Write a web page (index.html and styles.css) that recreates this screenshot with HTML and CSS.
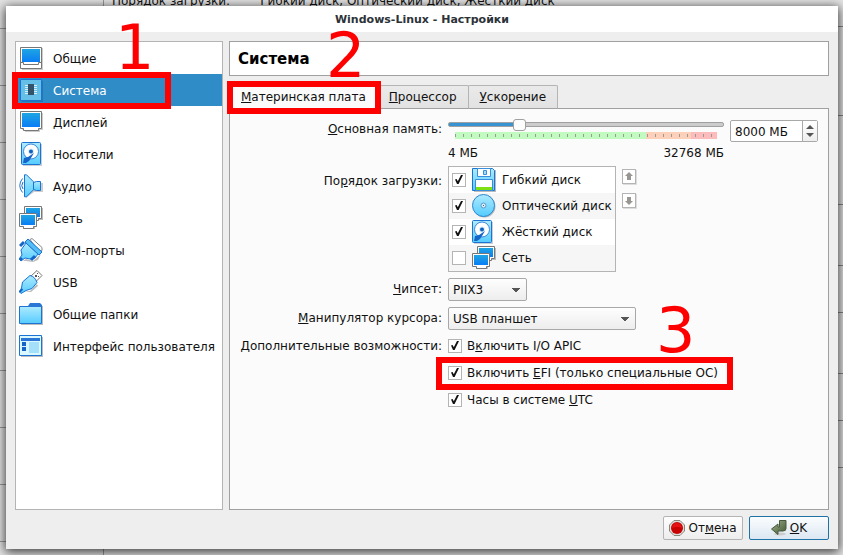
FILE: index.html
```
<!DOCTYPE html>
<html lang="ru">
<head>
    <meta charset="UTF-8">
    <title>Windows-Linux - Настройки</title>
    <link rel="stylesheet" href="styles.css">
</head>
<body>
<svg class="sprite" aria-hidden="true">
    <defs>
        <linearGradient id="blue" x1="0" y1="0" x2="0" y2="1">
            <stop offset="0" stop-color="#1ea5e2"/><stop offset="1" stop-color="#0a7df5"/>
        </linearGradient>
        <linearGradient id="sky" x1="0" y1="0" x2="0" y2="1">
            <stop offset="0" stop-color="#aeeaff"/><stop offset="1" stop-color="#55ccff"/>
        </linearGradient>
        <linearGradient id="olive" x1="0" y1="0" x2="1" y2="1">
            <stop offset="0" stop-color="#9db184"/><stop offset="1" stop-color="#43563a"/>
        </linearGradient>
    </defs>
    <symbol id="i-general" viewBox="0 0 24 24">
        <path d="M2 2h22v22H3z" fill="#ccc"/>
        <path d="M1.500 1.500h21v21h-21z" fill="#fff" stroke="#777"/>
        <path d="M3 3h18v13H3z" fill="url(#blue)"/>
        <path d="M1.500 16.500h3v2h15v-2h3" fill="none" stroke="#777"/>
    </symbol>
    <symbol id="i-system" viewBox="0 0 24 24">
        <path d="M3 3h21v21H3z" fill="#2377b4"/>
        <path d="M1.500 1.500h21v21h-21z" fill="url(#sky)" stroke="#1c73d2"/>
        <path d="M2 2h20v20H2z" fill="#65bfe6"/>
        <path d="M6 7.500h12M6 9.500h12M6 11.500h12M6 13.500h12M6 15.500h12" stroke="#d8f0fa"/>
        <path d="M9 6h6v11H9z" fill="#33536b"/>
    </symbol>
    <symbol id="i-display" viewBox="0 0 24 24">
        <path d="M3 3h21v17h-3v2H6v-2H3z" fill="#ccc"/>
        <path d="M1.500 1.500h21v17h-3v2h-15v-2h-3z" fill="#fff" stroke="#777"/>
        <path d="M3 3h18v14H3z" fill="url(#blue)"/>
    </symbol>
    <symbol id="i-disk" viewBox="0 0 24 24">
        <path d="M2 2h19v22H2z" fill="#c8d0d6"/>
        <rect x=".5" y=".5" width="19" height="22" rx="1" fill="url(#sky)" stroke="#1c73d2"/>
        <circle cx="10" cy="9.500" r="7.500" fill="#fff" stroke="#3a86d8"/>
        <circle cx="10" cy="9.500" r="3" fill="#d6ecf8"/>
        <circle cx="10" cy="9.500" r="2" fill="#1060c0"/>
        <path d="M2 21l1-5 4-1 6-4-3 5-2 3-3 2z" fill="#1565c8"/>
    </symbol>
    <symbol id="i-audio" viewBox="0 0 24 24">
        <path d="M7 3l8 6h9v9h-9l-8 6z" fill="#ccc"/>
        <path d="M5.500 .8h2l7 7v8l-7 7h-2z" fill="url(#sky)" stroke="#1c73d2"/>
        <path d="M14.500 8.500l3-1h4v9h-4l-3-1z" fill="url(#sky)" stroke="#1c73d2"/>
        <path d="M3.500 4.500q-5.500 7 0 14M4 8q-2.500 4 0 7" fill="none" stroke="#1c73d2"/>
    </symbol>
    <symbol id="i-net" viewBox="0 0 24 24">
        <path d="M8 2h16v12h-6v7h-2v2H4z" fill="#bbb"/>
        <path d="M5.500 .5h17v12h-3v2h-10v-2h-4z" fill="#fff" stroke="#777"/>
        <path d="M7 2h14v9H7z" fill="url(#blue)"/>
        <path d="M.5 7.500h17v13h-3v2h-10v-2h-4z" fill="#fff" stroke="#777"/>
        <path d="M2 9h14v10H2z" fill="url(#blue)"/>
    </symbol>
    <symbol id="i-com" viewBox="0 0 24 24">
        <path d="M11 1.500l2-1 10 9v3l-3 1z" fill="#fff" stroke="#888"/>
        <path d="M4 23l3-2 7 2 8-7-3 6-5 2-7-1z" fill="#bbb"/>
        <path d="M7 5l12 11-3 4-5 1-5-1-4 3-2-2 3-4-1-5z" fill="url(#sky)" stroke="#1c73d2"/>
        <path d="M9 1l14 13-3 3L6 4z" fill="#55bff5" stroke="#1c73d2"/>
        <path d="M1 8l4-4M12 22l4-4M1 22l2-2" stroke="#1565c8" stroke-width="3"/>
    </symbol>
    <symbol id="i-usb" viewBox="0 0 24 24">
        <path d="M12 6l6-5.500 5 5-6 6z" fill="#fff" stroke="#777"/>
        <path d="M16 5h2v2h-2zM18 3h1v1h-1zM19 6h1v1h-1z" fill="#555"/>
        <path d="M5 22l6-1 7-7 1 2-7 6z" fill="#bbb"/>
        <path d="M11 5.500q5 1 7 7l-5 6-6 2-5 3-1.500-1.500 2-4 1-6z" fill="url(#sky)" stroke="#1c73d2"/>
        <path d="M.5 22l3-3" stroke="#1565c8" stroke-width="2"/>
    </symbol>
    <symbol id="i-folder" viewBox="0 0 24 24">
        <path d="M2 4h22v19H2z" fill="#bbb"/>
        <path d="M9 4l2-3h10l2 2v3H9z" fill="#2b76d4"/>
        <path d="M.5 4.500h22v17h-22z" fill="url(#sky)" stroke="#1c73d2"/>
        <path d="M9 4h13v1H9z" fill="#2b76d4"/>
    </symbol>
    <symbol id="i-ui" viewBox="0 0 24 24">
        <path d="M2 3h22v20H2z" fill="#bbb"/>
        <path d="M.5 1.500h22v20h-22z" fill="#d9f8ff" stroke="#1c73d2"/>
        <path d="M2 4h19v3H2z" fill="#2b76d4"/>
        <path d="M3 8h4v4H3zM3 13h4v4H3z" fill="#1565c8"/>
        <path d="M10 8h10v11H10z" fill="#a5e0fa"/>
    </symbol>
    <symbol id="i-floppy" viewBox="0 0 24 24">
        <path d="M2 2h22v22H2z" fill="#bbb"/>
        <path d="M.5 .5h20l2 2v20h-22z" fill="url(#sky)" stroke="#1c73d2"/>
        <path d="M5.500 .5h13v8h-13z" fill="#fff" stroke="#3a8fdc"/>
        <path d="M11.500 2.500h3v4h-3z" fill="#9bdcf8" stroke="#3a8fdc"/>
        <path d="M3.500 11.500h17v11h-17z" fill="#fff" stroke="#3a8fdc"/>
        <path d="M4 19h16v3H4z" fill="#7ee010"/>
    </symbol>
    <symbol id="i-cd" viewBox="0 0 24 24">
        <circle cx="12.500" cy="12.500" r="11" fill="#bbb"/>
        <circle cx="11.500" cy="11.500" r="11" fill="url(#sky)" stroke="#2f85cc"/>
        <circle cx="11.500" cy="11.500" r="2.500" fill="#d8eaf4" stroke="#5a9cc8"/>
        <path d="M11 11h1v1h-1z" fill="#3a70a0"/>
    </symbol>
    <symbol id="i-cancel" viewBox="0 0 16 16">
        <path d="M5 .5h6L15.500 5v6L11 15.500H5L.5 11V5z" fill="#ddd" stroke="#888477"/>
        <circle cx="8" cy="8" r="6" fill="#c80000"/>
        <path d="M3 8a5 5 0 0 1 10 0q-5-2-10 0z" fill="#e41212"/>
    </symbol>
    <symbol id="i-ok" viewBox="0 0 16 16">
        <ellipse cx="9" cy="14" rx="6" ry="1.500" fill="#ccc"/>
        <path d="M8.500 .5h6.500v8q0 2.500-3 2.500H7v3.500L.5 9 7 4v3h1.500z" fill="url(#olive)" stroke="#48583c"/>
    </symbol>
</svg>

<!-- окно менеджера позади диалога -->
<div class="backdrop">
    <div class="lines_left"></div>
    <svg class="lines_right"><path d="M0 26.500h6M0 115.500h6M0 204.500h6M0 265.500h6M0 312.500h6M0 373.500h6M0 420.500h6M0 467.500h6" stroke="#888"/></svg>
    <div class="behind"><span>Порядок загрузки:</span><span>Гибкий диск, Оптический диск, Жёсткий диск</span></div>
</div>

<div class="dialog">
    <div class="titlebar">Windows-Linux - Настройки</div>
    <div class="body">
        <nav class="sidebar">
            <a href="#"><svg><use href="#i-general"/></svg>Общие</a>
            <a href="#" class="active"><svg><use href="#i-system"/></svg>Система<i class="mark mark1"></i><b class="num num1">1</b></a>
            <a href="#"><svg><use href="#i-display"/></svg>Дисплей</a>
            <a href="#"><svg><use href="#i-disk" x="2"/></svg>Носители</a>
            <a href="#"><svg><use href="#i-audio"/></svg>Аудио</a>
            <a href="#"><svg><use href="#i-net"/></svg>Сеть</a>
            <a href="#"><svg><use href="#i-com"/></svg>COM-порты</a>
            <a href="#"><svg><use href="#i-usb"/></svg>USB</a>
            <a href="#"><svg><use href="#i-folder"/></svg>Общие папки</a>
            <a href="#"><svg><use href="#i-ui"/></svg>Интерфейс пользователя</a>
        </nav>
        <main class="content">
            <h1>Система</h1>
            <div class="tabs">
                <button class="tab current"><u>М</u>атеринская плата<i class="mark mark2"></i><b class="num num2">2</b></button>
                <button class="tab"><u>П</u>роцессор</button>
                <button class="tab"><u>У</u>скорение</button>
            </div>
            <div class="panel">
                <div class="row memory">
                    <label class="caption" for="memory"><u>О</u>сновная память:</label>
                    <div class="scale">
                        <input type="range" id="memory" min="4" max="32768" value="8000">
                        <div class="ruler"></div>
                        <div class="limits"><span>4 МБ</span><span>32768 МБ</span></div>
                    </div>
                    <div class="spin">
                        <input type="text" value="8000 МБ" aria-label="Основная память, МБ">
                        <button aria-label="Изменить"><svg viewBox="0 0 14 20"><path d="M3 8l4-4 4 4zM3 12l4 4 4-4z" fill="#555"/></svg></button>
                    </div>
                </div>
                <div class="row boot">
                    <span class="caption">По<u>р</u>ядок загрузки:</span>
                    <div class="boot_list">
                        <label><input type="checkbox" checked><svg><use href="#i-floppy"/></svg>Гибкий диск</label>
                        <label><input type="checkbox" checked><svg><use href="#i-cd"/></svg>Оптический диск</label>
                        <label><input type="checkbox" checked><svg><use href="#i-disk"/></svg>Жёсткий диск</label>
                        <label><input type="checkbox"><svg><use href="#i-net"/></svg>Сеть</label>
                    </div>
                    <div class="arrows">
                        <button aria-label="Вверх"><svg viewBox="0 0 12 13"><path d="M6 2l4 4H8v4H4V6H2z" fill="#999691"/></svg></button>
                        <button aria-label="Вниз"><svg viewBox="0 0 12 13"><path d="M6 11l4-4H8V3H4v4H2z" fill="#999691"/></svg></button>
                    </div>
                </div>
                <div class="row">
                    <label class="caption" for="chipset"><u>Ч</u>ипсет:</label>
                    <select id="chipset" class="short"><option>PIIX3</option></select>
                </div>
                <div class="row">
                    <label class="caption" for="pointer"><u>М</u>анипулятор курсора:</label>
                    <select id="pointer" class="long"><option>USB планшет</option></select>
                </div>
                <div class="row extra">
                    <span class="caption">Дополнительные возможности:</span>
                    <div class="checks">
                        <label><input type="checkbox" checked><span>В<u>к</u>лючить I/O APIC</span></label>
                        <label><input type="checkbox" checked><span>Включить <u>E</u>FI (только специальные ОС)</span><i class="mark mark3"></i><b class="num num3">3</b></label>
                        <label><input type="checkbox" checked><span>Часы в системе <u>U</u>TC</span></label>
                    </div>
                </div>
            </div>
        </main>
    </div>
    <div class="footer">
        <button class="btn"><svg><use href="#i-cancel"/></svg><span>От<u>м</u>ена</span></button>
        <button class="btn default"><svg><use href="#i-ok"/></svg><span><u>O</u>K</span></button>
    </div>
</div>
</body>
</html>
```
FILE: styles.css
```
*{
    margin: 0;
    padding: 0;
    box-sizing: border-box;
}
body{
    min-height: 100vh;
    display: flex;
    padding: 6px 5px 6px 6px;
    background: #fff;
    color: #111;
    overflow: hidden;
    font-family: "DejaVu Sans", sans-serif;
    font-size: 12px;
    line-height: 16px;
}
button,input,select{
    font: inherit;
    color: inherit;
}
svg{
    display: block;
    flex: none;
}
.sprite{
    position: absolute;
    width: 0;
    height: 0;
}

/* задний план */
.backdrop{
    position: absolute;
    inset: 0;
    overflow: hidden;
    background: #e4e4e4;
}
.lines_left{
    position: absolute;
    left: 0;
    top: 0;
    bottom: 0;
    width: 104px;
    border-right: 1px solid #999;
    background: repeating-linear-gradient(#0000 0 28px, #999 28px 29px, #0000 29px 57px);
}
.lines_right{
    position: absolute;
    right: 0;
    top: 0;
    width: 6px;
    height: 100%;
}
.behind{
    position: absolute;
    left: 112px;
    top: -7px;
    display: flex;
    gap: 30px;
}

.dialog{
    position: relative;
    flex: 1;
    display: flex;
    flex-direction: column;
    background: #eee;
    box-shadow: 0 2px 10px 1px rgba(0,0,0,0.75);
}
.titlebar{
    height: 26px;
    background: #fff;
    color: #2c3338;
    font-size: 11px;
    font-weight: bold;
    line-height: 27px;
    text-align: center;
}
.body{
    flex: 1;
    display: flex;
    gap: 6px;
    padding: 9px 9px 0;
}
.sidebar{
    width: 208px;
    background: #fff;
    border: 1px solid #b4b4b4;
}
.sidebar a{
    position: relative;
    display: flex;
    align-items: center;
    gap: 10px;
    height: 32px;
    padding: 2px 0 0 3px;
    color: #111;
    text-decoration: none;
}
.sidebar svg,.boot_list svg{
    width: 24px;
    height: 24px;
}
.sidebar svg{
    margin-bottom: 2px;
}
.sidebar a.active{
    background: #308cc6;
    color: #fff;
}
.content{
    flex: 1;
    display: flex;
    flex-direction: column;
}
h1{
    height: 35px;
    padding-left: 8px;
    background: #fff;
    border: 1px solid #a0a0a0;
    color: #000;
    font-size: 15px;
    line-height: 34px;
}
.tabs{
    position: relative;
    z-index: 1;
    display: flex;
    align-items: flex-end;
    height: 33px;
}
.tab{
    height: 24px;
    padding: 0 11px;
    margin-left: -1px;
    background: linear-gradient(#eaeaea, #e2e2e2);
    border: 1px solid #b4b4b4;
    border-bottom-color: #a0a0a0;
    border-radius: 2px 2px 0 0;
}
.tab.current{
    position: relative;
    height: 26px;
    margin-left: 0;
    background: #fbfbfb;
    border-bottom: 0;
}
.panel{
    flex: 1;
    display: flex;
    flex-direction: column;
    gap: 6px;
    margin-top: -1px;
    padding: 11px 10px;
    background: #fbfbfb;
    border: 1px solid #a0a0a0;
}
.row{
    display: flex;
    align-items: flex-start;
    gap: 6px;
}
.caption{
    width: 202px;
    text-align: right;
    line-height: 23px;
    white-space: nowrap;
}
.memory .caption{
    line-height: 18px;
}
.memory{
    height: 40px;
}
.boot .caption{
    padding-top: 4px;
}
.scale{
    flex: 1;
}
.spin{
    display: flex;
    width: 88px;
    height: 22px;
    background: #fff;
    border: 1px solid #a8a8a8;
    border-radius: 2px;
}
.spin input{
    flex: 1;
    min-width: 0;
    padding: 2px 0 0 4px;
    background: none;
    border: 0;
}
.spin button{
    width: 15px;
    background: linear-gradient(#fff, #eee);
    border: 0;
    border-left: 1px solid #a8a8a8;
}
input[type=range]{
    display: block;
    width: 100%;
    height: 12px;
    margin-top: -2px;
    background: none;
    -webkit-appearance: none;
    appearance: none;
}
input[type=range]::-webkit-slider-runnable-track{
    height: 5px;
    border: 1px solid #a0a0a0;
    border-radius: 2px;
    background: linear-gradient(90deg, #3793d2 26%, #ccc 26%);
}
input[type=range]::-webkit-slider-thumb{
    -webkit-appearance: none;
    width: 13px;
    height: 12px;
    margin-top: -4px;
    background: #fdfdfd;
    border: 1px solid #a0a0a0;
    border-radius: 3px;
}
.ruler{
    height: 7px;
    margin: 2px 7px 6px;
    background:
        repeating-linear-gradient(90deg, #999 0 1px, #0000 1px 8px) 0 2px / 100% 3px no-repeat,
        linear-gradient(90deg, #c1fbbf 73%, #fdd0ba 73% 90%, #fdbcbc 90%);
}
.limits{
    display: flex;
    justify-content: space-between;
}
.boot_list{
    width: 168px;
    background: #fff;
    border: 1px solid #b4b4b4;
}
.boot_list label{
    display: flex;
    align-items: center;
    height: 26px;
    padding-left: 3px;
    white-space: nowrap;
}
.boot_list label:nth-child(even){
    background: #f6f6f6;
}
.boot_list svg{
    margin: 0 6px;
}
input[type=checkbox]{
    -webkit-appearance: none;
    appearance: none;
    flex: none;
    width: 14px;
    height: 14px;
    background: #fff;
    border: 1px solid #b4b4b4;
}
input[type=checkbox]:checked::before{
    content: "";
    display: block;
    width: 8px;
    height: 9px;
    margin: 1px 2px;
    background: #111;
    clip-path: polygon(0 50%, 20% 45%, 35% 70%, 75% 0, 100% 0, 45% 100%, 25% 100%);
}
.arrows{
    display: flex;
    flex-direction: column;
    gap: 9px;
    padding-top: 3px;
}
.arrows button{
    width: 14px;
    height: 15px;
    background: #fff;
    border: 1px solid #b4b4b4;
    box-shadow: 1px 1px 0 #ddd;
}
select{
    -webkit-appearance: none;
    appearance: none;
    height: 23px;
    padding: 0 4px;
    border: 1px solid #a8a8a8;
    border-radius: 2px;
    background:
        conic-gradient(from -45deg at 50% 100%, #555 90deg, #0000 0) right 6px center / 8px 4px no-repeat,
        linear-gradient(#fefefe, #ededed);
}
.short{
    width: 79px;
}
.long{
    width: 188px;
}
.extra .caption{
    line-height: 20px;
}
.checks{
    display: flex;
    flex-direction: column;
    gap: 7px;
}
.checks label{
    position: relative;
    display: flex;
    align-items: center;
    gap: 5px;
    height: 20px;
    white-space: nowrap;
}
.footer{
    display: flex;
    justify-content: flex-end;
    gap: 6px;
    padding: 6px 9px 9px;
}
.btn{
    display: flex;
    align-items: center;
    justify-content: center;
    gap: 3px;
    width: 80px;
    height: 24px;
    background: linear-gradient(#fefefe, #ededed);
    border: 1px solid #b4b4b4;
    border-radius: 2px;
}
.btn svg{
    width: 16px;
    height: 16px;
}
.btn.default{
    border-color: #1f72a6;
    background: linear-gradient(#fbfdfe, #dbe7f2);
}

/* красные пометки */
.mark{
    position: absolute;
    border: 6px solid #f00;
}
.num{
    position: absolute;
    color: #f00;
    font-size: 62px;
    font-weight: normal;
    line-height: 62px;
}
.mark1{
    left: -4px;
    top: -2px;
    width: 159px;
    height: 37px;
}
.num1{
    left: 99px;
    top: -57px;
}
.mark2{
    left: -3px;
    top: -3px;
    width: 154px;
    height: 33px;
}
.num2{
    left: 96px;
    top: -59px;
}
.mark3{
    left: -12px;
    top: -6px;
    width: 297px;
    height: 33px;
}
.num3{
    left: 208px;
    top: -63px;
}
```
